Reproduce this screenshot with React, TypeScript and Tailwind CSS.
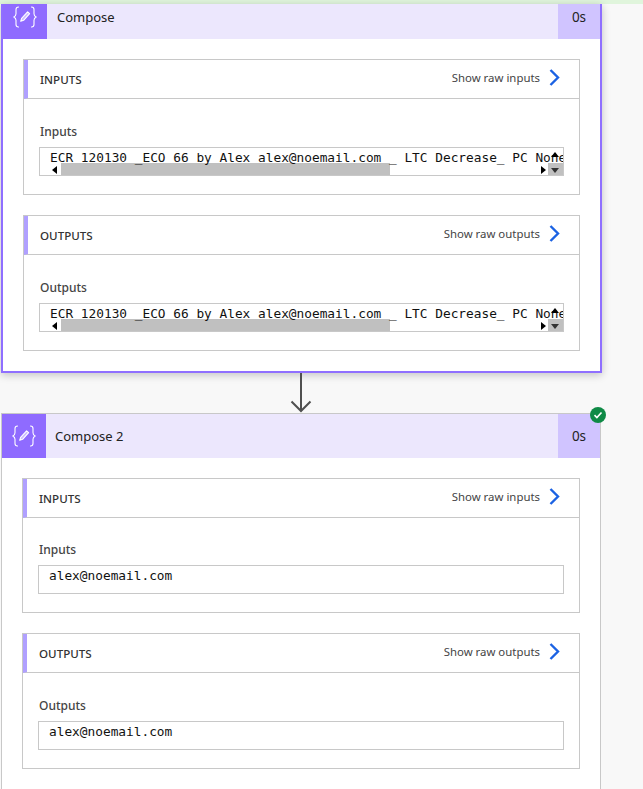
const sansFont = "font-['Noto_Sans',sans-serif]";

function ComposeIcon() {
  return (
    <svg width="24" height="22" viewBox="0 0 24 22" fill="none" stroke="#fff" strokeWidth="1.1" strokeLinecap="round" strokeLinejoin="round">
      <path d="M5.5 1c-2 0-2.5 1-2.5 2.5v4.2c0 1.6-.7 2.6-2.2 3.3 1.5.7 2.2 1.7 2.2 3.3v4.2c0 1.5.5 2.5 2.5 2.5" />
      <path d="M18.5 1c2 0 2.5 1 2.5 2.5v4.2c0 1.6.7 2.6 2.2 3.3-1.5.7-2.2 1.7-2.2 3.3v4.2c0 1.5-.5 2.5-2.5 2.5" />
      <path d="M14.6 5.8l2 1.9-6 6.6-2.9 1 .9-2.9z" fill="#fff" fillOpacity="0.55" />
    </svg>
  );
}

function Chevron() {
  return (
    <svg width="11" height="17" viewBox="0 0 11 17" fill="none" stroke="#1b62e3" strokeWidth="2.4">
      <path d="M1.5 1l7.5 7.5L1.5 16" />
    </svg>
  );
}

function ScrollThumbs() {
  return (
    <>
      <div className="absolute left-[21px] top-[15px] w-[329px] h-[13px] bg-[#c0c0c0]" />
      <div className="absolute left-[508px] top-[15px] w-[15px] h-[13px] bg-[#c0c0c0]" />
    </>
  );
}

function ScrollArrows() {
  return (
    <>
      <div className="absolute left-[12px] top-[18px] w-0 h-0 border-y-[4px] border-y-transparent border-r-[5px] border-r-black" />
      <div className="absolute left-[501px] top-[18px] w-0 h-0 border-y-[4px] border-y-transparent border-l-[5px] border-l-black" />
      <div className="absolute left-[511px] top-[4px] w-0 h-0 border-x-[4px] border-x-transparent border-b-[5px] border-b-black" />
      <div className="absolute left-[511px] top-[20px] w-0 h-0 border-x-[4px] border-x-transparent border-t-[5px] border-t-[#333]" />
    </>
  );
}

type SectionProps = {
  title: string;
  label: string;
  raw: string;
  value: string;
  scroll?: boolean;
  tight?: boolean;
};

function Section({ title, label, raw, value, scroll, tight }: SectionProps) {
  return (
    <div className={`border border-[#c8c8c8] bg-white ${tight ? "h-[135px]" : "h-[136px]"}`}>
      <div className="h-[39px] flex items-center justify-between border-b border-[#c8c8c8] border-l-[4px] border-l-[#b0a0ff] pl-[12px] pr-[19px]">
        <span className="pt-[2px] text-[11.6px] font-medium text-[#333]">{title}</span>
        <div className="flex items-center gap-[9px] pb-[2px]">
          <span className="text-[11.4px] text-[#444]">{raw}</span>
          <Chevron />
        </div>
      </div>
      <div className="px-[15px] pt-[24px]">
        <div className={`pl-[1px] text-[12px] font-medium text-[#444] leading-[17px] ${tight ? "h-[23px] -mt-[1px]" : "h-[24px]"}`}>{label}</div>
        <div className={`relative h-[29px] border border-[#c8c8c8] overflow-hidden ${tight ? "mt-[1px]" : ""}`}>
          {scroll && <ScrollThumbs />}
          <div className="relative pl-[10px] pt-[1px] font-['DejaVu_Sans_Mono',monospace] text-[12.8px] leading-[17px] whitespace-pre text-[#111]">{value}</div>
          {scroll && <ScrollArrows />}
        </div>
      </div>
    </div>
  );
}

export default function App() {
  const longValue = "ECR 120130 _ECO 66 by Alex alex@noemail.com _ LTC Decrease_ PC None";

  return (
    <div className={`w-[643px] h-[789px] overflow-hidden bg-[#f8f8f8] ${sansFont}`}>
      <div className="h-[4px] bg-[#e0f5dc]" />

      {/* Compose card, scrolled so the header is cut */}
      <div className="ml-[1px] w-[601px] h-[369px] bg-white border-2 border-t-0 border-[#8f6fff] shadow-[0_2px_8px_rgba(0,0,0,0.22)]">
        <div className="h-[35px] flex items-stretch bg-[#ece7fd]">
          <div className="w-[44px] pb-[9px] bg-[#8f6bff] flex items-center justify-center">
            <ComposeIcon />
          </div>
          <div className="flex-1 pl-[10px] text-[13px] leading-[27px] text-[#222]">Compose</div>
          <div className="w-[42px] pb-[9px] bg-[#d0c4ff] flex items-center justify-center text-[13.5px] text-[#222]">0s</div>
        </div>
        <div className="px-[20px] pt-[20px] flex flex-col gap-[20px]">
          <Section title="INPUTS" label="Inputs" raw="Show raw inputs" value={longValue} scroll />
          <Section title="OUTPUTS" label="Outputs" raw="Show raw outputs" value={longValue} scroll />
        </div>
      </div>

      {/* connector arrow */}
      <div className="h-[40px] ml-[290px] w-[22px]">
        <svg width="22" height="40" viewBox="0 0 22 40" fill="none" stroke="#505050" strokeWidth="2">
          <path d="M11 0v38" />
          <path d="M1.5 28.5l9.5 9.5 9.5-9.5" />
        </svg>
      </div>

      {/* Compose 2 card */}
      <div className="relative ml-[1px] w-[600px] h-[380px] bg-white border border-[#c8c8c8]">
        <div className="h-[44px] flex items-stretch bg-[#ece7fd]">
          <div className="w-[44px] bg-[#8f6bff] flex items-center justify-center">
            <ComposeIcon />
          </div>
          <div className="flex-1 pl-[9px] pt-[1px] flex items-center text-[13px] text-[#222]">Compose 2</div>
          <div className="w-[42px] bg-[#d0c4ff] flex items-center justify-center text-[13.5px] text-[#222]">0s</div>
        </div>
        <div className="px-[20px] pt-[20px] flex flex-col gap-[20px]">
          <Section title="INPUTS" label="Inputs" raw="Show raw inputs" value="alex@noemail.com" tight />
          <Section title="OUTPUTS" label="Outputs" raw="Show raw outputs" value="alex@noemail.com" />
        </div>
        <div className="absolute -right-[6px] -top-[7px] w-[16px] h-[16px] rounded-full bg-[#0f8a46] flex items-center justify-center">
          <svg width="10" height="10" viewBox="0 0 10 10" fill="none" stroke="#fff" strokeWidth="1.6">
            <path d="M1.5 5.2l2.4 2.3 4.6-5" />
          </svg>
        </div>
      </div>
    </div>
  );
}
